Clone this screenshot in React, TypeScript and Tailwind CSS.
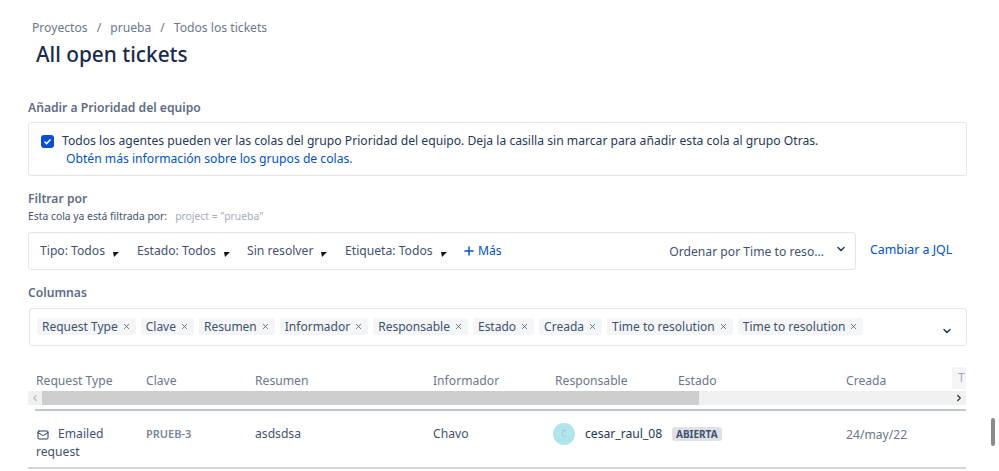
import { ChevronDown, ChevronLeft, ChevronRight, Mail, Plus, X } from "lucide-react"

const filters = ["Tipo: Todos", "Estado: Todos", "Sin resolver", "Etiqueta: Todos"]
const filterWidths = ["w-[97px]", "w-[110px]", "w-[98px]", "w-[118px]"]
const columns = [
  "Request Type",
  "Clave",
  "Resumen",
  "Informador",
  "Responsable",
  "Estado",
  "Creada",
  "Time to resolution",
  "Time to resolution",
]

function Caret() {
  return (
    <svg width="6" height="6" viewBox="0 0 6 6" className="mt-[6px] shrink-0">
      <path d="M0 1 H6 L1 6 Z" fill="#111" />
    </svg>
  )
}

export default function App() {
  return (
    <div className="relative h-[471px] w-[999px] overflow-hidden bg-white font-['Noto_Sans',sans-serif] text-[12.15px] text-[#42526e]">
      <div className="w-[967px] pl-7 pt-[20px]">
        <div className="flex h-[17px] items-center gap-[9px] pl-1 text-[#6b778c]">
          <span>Proyectos</span>
          <span>/</span>
          <span>prueba</span>
          <span>/</span>
          <span>Todos los tickets</span>
        </div>
        <h1 className="mt-[2px] h-[30px] pl-2 text-[20.8px] font-medium leading-[30px] text-[#172b4d]">All open tickets</h1>

        <div className="mt-[30px] h-[18px] font-semibold leading-[18px] text-[#5e6c84]">Añadir a Prioridad del equipo</div>
        <div className="mt-[5px] h-[54px] rounded-[3px] border border-[#e3e5ea] pl-[12px] pt-[9px]">
          <div className="flex items-center gap-[8px]">
            <span className="flex h-[13px] w-[13px] items-center justify-center rounded-[3px] bg-[#0b4fd0]">
              <svg width="9" height="9" viewBox="0 0 9 9">
                <path d="M1.5 4.6 L3.6 6.6 L7.5 2.4" fill="none" stroke="#fff" strokeWidth="1.5" />
              </svg>
            </span>
            <span className="whitespace-nowrap leading-[18px] text-[#253858]">
              Todos los agentes pueden ver las colas del grupo Prioridad del equipo. Deja la casilla sin marcar para añadir esta cola al grupo Otras.
            </span>
          </div>
          <a className="block pl-[25px] leading-[18px] text-[#0052cc]">Obtén más información sobre los grupos de colas.</a>
        </div>

        <div className="mt-[14px] h-[18px] font-semibold leading-[18px] text-[#5e6c84]">Filtrar por</div>
        <div className="mt-[1px] flex h-[16px] items-center gap-[8px] text-[10.35px]">
          <span>Esta cola ya está filtrada por:</span>
          <span className="text-[#a5adba]">project = "prueba"</span>
        </div>
        <div className="mt-[7px] flex items-start">
          <div className="flex h-[38px] w-[828px] items-center rounded-[3px] border border-[#e3e5ea] pl-[11px] pr-[8px]">
            {filters.map((f, i) => (
              <div key={f} className={`flex items-center gap-[8px] whitespace-nowrap ${filterWidths[i]}`}>
                <span>{f}</span>
                <Caret />
              </div>
            ))}
            <div className="flex items-center text-[#0052cc]">
              <Plus size={14} strokeWidth={2.5} className="-ml-[1px]" />
              <span className="ml-[2px]">Más</span>
            </div>
            <div className="ml-auto flex items-center gap-[11px] pt-[3px]">
              <span className="whitespace-nowrap">Ordenar por Time to reso...</span>
              <ChevronDown size={12} strokeWidth={3} className="mb-[6px] text-[#253858]" />
            </div>
          </div>
          <a className="ml-[14px] mt-[9px] whitespace-nowrap text-[12.4px] text-[#0052cc]">Cambiar a JQL</a>
        </div>

        <div className="mt-[14px] h-[18px] font-semibold leading-[18px] text-[#5e6c84]">Columnas</div>
        <div className="ml-px mt-[6px] flex h-[38px] w-[938px] rounded-[3px] border border-[#e3e5ea] pl-[7px] pt-[9px]">
          <div className="flex h-[17px] gap-[5px]">
            {columns.map((c, i) => (
              <span key={i} className="flex items-center gap-[4px] whitespace-nowrap rounded-[3px] bg-[#f4f5f7] px-[5px] text-[12px]">
                {c}
                <X size={9} strokeWidth={2} />
              </span>
            ))}
          </div>
          <ChevronDown size={12} strokeWidth={3} className="ml-auto mr-[13px] mt-[7px] text-[#253858]" />
        </div>

        <div className="relative mt-[15px] w-[938px]">
          <div className="absolute right-0 top-[6px] h-[22px] w-[14px] bg-[#f4f5f7] pl-[6px] leading-[22px] text-[#a5adba]">T</div>
          <div className="flex h-[30px] items-end pb-[1px] pl-2 text-[#6b778c]">
            <span className="w-[110px]">Request Type</span>
            <span className="w-[109px]">Clave</span>
            <span className="w-[178px]">Resumen</span>
            <span className="w-[122px]">Informador</span>
            <span className="w-[123px]">Responsable</span>
            <span className="w-[168px]">Estado</span>
            <span>Creada</span>
          </div>
          <div className="flex h-[14px] bg-[#f0f0f0]">
            <div className="flex w-[14px] items-center justify-center text-[#a3a3a3]">
              <ChevronLeft size={10} strokeWidth={2.5} />
            </div>
            <div className="h-full w-[657px] bg-[#cdcdcd]" />
            <div className="ml-auto flex w-[14px] items-center justify-center text-[#333]">
              <ChevronRight size={10} strokeWidth={3} />
            </div>
          </div>
          <div className="ml-[7px] mt-[4px] h-[2px] bg-[#c1c7d0]" />
          <div className="flex h-[58px] border-b-2 border-[#d5d5d5] pl-2 pt-[14px] text-[#42526e]">
            <div className="w-[110px] leading-[18px]">
              <Mail size={12} className="mb-[-1px] ml-px mr-[9px] inline-block text-[#253858]" />
              Emailed
              <br />
              request
            </div>
            <span className="w-[109px] text-[11px] font-semibold leading-[18px] text-[#7a869a]">PRUEB-3</span>
            <span className="w-[178px] leading-[18px]">asdsdsa</span>
            <span className="w-[120px] leading-[18px]">Chavo</span>
            <div className="flex w-[119px] items-start gap-[10px]">
              <span className="mt-[-2px] flex h-[22px] w-[22px] items-center justify-center rounded-full bg-[#b2e4ec] text-[9px] text-[#a5c3d0]">C</span>
              <span className="leading-[18px] text-[#253858]">cesar_raul_08</span>
            </div>
            <div className="w-[174px]">
              <span className="mt-[2px] inline-block h-[14px] rounded-[3px] bg-[#dfe1e6] px-1 text-[10px] font-bold leading-[14px]">ABIERTA</span>
            </div>
            <span className="leading-[20px] text-[#6b778c]">24/may/22</span>
          </div>
        </div>
      </div>
      <div className="absolute left-[991px] top-[418px] h-[28px] w-[4px] rounded-full bg-[#8a8a8a]" />
    </div>
  )
}
